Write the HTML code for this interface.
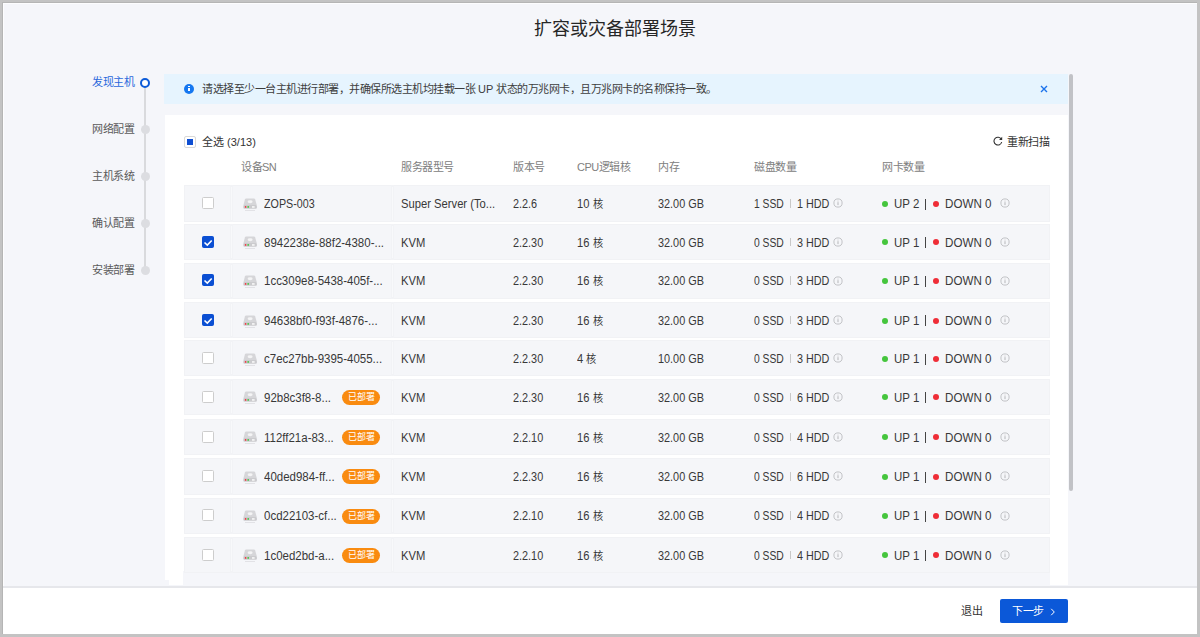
<!DOCTYPE html>
<html lang="zh-CN"><head><meta charset="utf-8">
<style>
*{margin:0;padding:0;box-sizing:border-box}
html,body{width:1200px;height:637px;overflow:hidden;background:#c3c3c3;font-family:"Liberation Sans",sans-serif}
#frame{position:absolute;left:2px;top:2px;width:1195px;height:632px;background:#b5b5b5}
#wl{position:absolute;left:3px;top:3px;width:1194px;height:631px;background:#fdfdfe}
#bg{position:absolute;left:4px;top:4px;width:1193px;height:630px;background:#f5f6fa}
.j{text-align:justify;text-align-last:justify;white-space:nowrap}
.title{position:absolute;left:534px;top:15px;width:162px;font-size:18px;color:#262626;line-height:28px}
.step{position:absolute;left:92.2px;width:42px;font-size:11px;letter-spacing:-0.5px;line-height:16px;color:#5a5a5a}
.step.act{color:#2a68dc}
.sdot{position:absolute;left:140.5px;width:9px;height:9px;border-radius:50%;background:#dcdde1}
.sdot.act{background:#fff;border:2px solid #0d5bd8;width:10px;height:10px;margin-left:-0.2px;margin-top:0px}
.vline{position:absolute;left:144px;top:84px;width:2px;height:186px;background:#d9dadd}
.alert{position:absolute;left:164px;top:74px;width:904px;height:29.5px;background:#e6f4fe}
.alert .ic{position:absolute;left:20px;top:9.5px;width:10px;height:10px;border-radius:50%;background:#1677f0}
.alert .ic:after{content:"";position:absolute;left:4.3px;top:4px;width:1.4px;height:3.6px;background:#fff}
.alert .ic:before{content:"";position:absolute;left:4.3px;top:2.2px;width:1.4px;height:1.2px;background:#fff}
.alert .txt{position:absolute;left:38px;top:7px;font-size:11px;letter-spacing:-0.5px;line-height:16px;color:#3d3d3d;white-space:nowrap}
.alert .x{position:absolute;left:876.3px;top:11px;width:8px;height:8px}
.scroll{position:absolute;left:1068.7px;top:74px;width:4px;height:417px;border-radius:2px;background:#c1c2c6}
.panel{position:absolute;left:165px;top:115px;width:903px;height:456px;background:#fff}
.cball{position:absolute;left:19px;top:21px;width:12px;height:12px;border:1px solid #d9d9d9;border-radius:2px;background:#fff}
.cball:after{content:"";position:absolute;left:2px;top:2px;width:6px;height:6px;background:#0f4fd2}
.selall{position:absolute;left:37px;top:19px;font-size:11px;line-height:16px;color:#333;white-space:nowrap}
.rescan{position:absolute;left:842px;top:19px;font-size:11px;letter-spacing:-0.5px;line-height:16px;color:#333;white-space:nowrap}
.hdr{position:absolute;top:44px;font-size:11px;letter-spacing:-0.5px;line-height:16px;color:#808080;white-space:nowrap}
.row{position:absolute;left:184px;width:866px;height:36.3px;background:#f5f6f9;box-shadow:inset 0 0 0 1px #f1f2f5}
.row .c0{position:absolute;left:46px;top:0;width:3px;height:100%;background:#f2f3f6;border-left:1px solid #f2f3f6;border-right:1px solid #f2f3f6}
.row .c0:after,.row .c1:after{content:"";position:absolute;left:0;top:2px;bottom:2px;width:1px;background:#f8f9fb}
.row .c1{position:absolute;left:206.5px;top:0;width:3px;height:100%;background:#f2f3f6;border-left:1px solid #f2f3f6;border-right:1px solid #f2f3f6}
.cb{position:absolute;left:18px;top:11.8px;width:12px;height:12px;border:1px solid #cdcdcd;border-radius:1.5px;background:#fff}
.cb.chk{background:#0b4fd3;border-color:#0b4fd3}
.cb.chk svg{position:absolute;left:-1px;top:-1px}
.srv{position:absolute;left:57px;top:10.5px}
.t{position:absolute;top:10.8px;font-size:12px;transform-origin:0 50%;line-height:16px;color:#383838;white-space:nowrap}
.sn{left:80px}
.t i{font-style:normal;font-size:11px;letter-spacing:0}
.badge{position:absolute;left:158px;top:11.2px;width:38px;height:15px;border-radius:8px;background:#f98b10;color:#fff;font-size:9px;line-height:15px;text-align:center}
.sep{position:absolute;top:13.9px;width:1px;height:8.5px;background:#c8c8c8}
.bar{position:absolute;left:740.8px;top:13.4px;width:1px;height:11px;background:#444}
.dot{position:absolute;top:15.55px;width:6px;height:6px;border-radius:50%}
.dot.g{left:698.3px;background:#45c53d}
.dot.r{left:749.2px;background:#ef2d37}
.inf1{position:absolute;left:649px;top:13px;line-height:0}
.inf2{position:absolute;left:816px;top:13px;line-height:0}
.footer{position:absolute;left:3px;top:586px;width:1194px;height:48px;background:#fff;border-top:2.5px solid #e6e7eb}
.quit{position:absolute;left:958px;top:15px;font-size:11px;letter-spacing:-0.5px;line-height:16px;color:#333}
.next{position:absolute;left:997px;top:10.5px;width:68px;height:24px;border-radius:2px;background:#0b58d8;color:#fff;font-size:10.5px;line-height:24px;text-align:left;padding-left:12px;white-space:nowrap}
</style></head><body>
<div id="frame"></div>
<div id="wl"></div><div id="bg"></div>
<div class="title j">扩容或灾备部署场景</div>
<div class="vline"></div>
<div class="step act j" style="top:74.3px">发现主机</div><div class="sdot act" style="top:77.8px"></div><div class="step j" style="top:121.3px">网络配置</div><div class="sdot" style="top:124.8px"></div><div class="step j" style="top:168.3px">主机系统</div><div class="sdot" style="top:171.8px"></div><div class="step j" style="top:215.3px">确认配置</div><div class="sdot" style="top:218.8px"></div><div class="step j" style="top:262.3px">安装部署</div><div class="sdot" style="top:265.8px"></div>
<div class="alert"><div class="ic"></div><div class="txt j" style="width:514.7px">请选择至少一台主机进行部署，并确保所选主机均挂载一张<span style="letter-spacing:0"> UP </span>状态的万兆网卡，且万兆网卡的名称保持一致。</div>
<svg class="x" viewBox="0 0 8 8"><path d="M1 1 L7 7 M7 1 L1 7" stroke="#1b72ec" stroke-width="1.4"/></svg></div>
<div class="scroll"></div>
<div style="position:absolute;left:1050px;top:571px;width:17.7px;height:14px;background:#fff"></div><div style="position:absolute;left:165px;top:571px;width:18px;height:9px;background:#fff"></div><div style="position:absolute;left:169px;top:580px;width:13.5px;height:5px;background:#fff"></div>
<div class="panel">
<div class="cball"></div><div class="selall j" style="width:53.8px">全选 (3/13)</div>
<div class="rescan j" style="width:42px"><svg width="10" height="10" viewBox="0 0 10 10" style="position:absolute;left:-14px;top:1.5px"><path d="M8.3 3.2 A3.9 3.9 0 1 0 8.7 6" fill="none" stroke="#333" stroke-width="1.1"/><path d="M9.2 0.8 L9.2 4 L6 4 Z" fill="#333"/></svg>重新扫描</div>
<div class="hdr j" style="left:76px;width:35.3px">设备SN</div>
<div class="hdr j" style="left:236px;width:52.5px">服务器型号</div>
<div class="hdr j" style="left:348px;width:31.5px">版本号</div>
<div class="hdr j" style="left:412px;width:53.3px">CPU逻辑核</div>
<div class="hdr j" style="left:493px;width:21px">内存</div>
<div class="hdr j" style="left:589px;width:42px">磁盘数量</div>
<div class="hdr j" style="left:717px;width:42px">网卡数量</div>
</div>
<div class="rows" style="position:absolute;left:0;top:0">
<div class="row" style="top:185.25px">
<div class="c0"></div><div class="c1"></div>
<div class="cb"></div>
<svg class="srv" width="18" height="16" viewBox="0 0 18 16"><path d="M2.4 9.2 L3.9 3.4 Q4.2 2.4 5.2 2.4 H12.9 Q13.9 2.4 14.2 3.4 L15.8 9.2 Z" fill="#d6d6d9"/><ellipse cx="9.1" cy="5.8" rx="2.5" ry="1.45" fill="#f4f4f5"/><rect x="2.3" y="8.9" width="13.6" height="3.9" rx="1.2" fill="#cbcbce"/><circle cx="4.6" cy="10.9" r="0.85" fill="#f0323a"/><circle cx="7.2" cy="10.9" r="0.85" fill="#3cc43c"/><rect x="11" y="10.2" width="2.6" height="1.5" fill="#fafafa"/><rect x="4" y="14.1" width="10" height="0.8" fill="#dedee1"/></svg>
<span class="t sn" style="transform:scaleX(0.893)">ZOPS-003</span>
<span class="t" style="left:217px;transform:scaleX(0.935)">Super Server (To...</span>
<span class="t" style="left:329px;transform:scaleX(0.905)">2.2.6</span>
<span class="t" style="left:393px;transform:scaleX(0.93)">10 <i>核</i></span>
<span class="t" style="left:474px;transform:scaleX(0.906)">32.00 GB</span>
<span class="t" style="left:570px;transform:scaleX(0.86)">1 SSD</span><span class="sep" style="left:606px"></span><span class="t" style="left:613px;transform:scaleX(0.9)">1 HDD</span><span class="inf1"><svg class="inf" width="10" height="10" viewBox="0 0 10 10"><circle cx="5" cy="5" r="4.1" fill="none" stroke="#bfc0c3" stroke-width="0.95"/><rect x="4.5" y="4.2" width="1" height="2.9" fill="#b5b6b9"/><rect x="4.5" y="2.6" width="1" height="0.95" fill="#c5c6c9"/></svg></span>
<span class="dot g"></span><span class="t" style="left:710px;transform:scaleX(0.956)">UP 2</span><span class="bar"></span><span class="dot r"></span><span class="t" style="left:761px;transform:scaleX(0.968)">DOWN 0</span><span class="inf2"><svg class="inf" width="10" height="10" viewBox="0 0 10 10"><circle cx="5" cy="5" r="4.1" fill="none" stroke="#bfc0c3" stroke-width="0.95"/><rect x="4.5" y="4.2" width="1" height="2.9" fill="#b5b6b9"/><rect x="4.5" y="2.6" width="1" height="0.95" fill="#c5c6c9"/></svg></span>
</div>
<div class="row" style="top:223.85px">
<div class="c0"></div><div class="c1"></div>
<div class="cb chk"><svg width="12" height="12" viewBox="0 0 12 12"><path d="M2.5 6.5 L5.3 9.1 L9.7 4.5" fill="none" stroke="#fff" stroke-width="1.6"/></svg></div>
<svg class="srv" width="18" height="16" viewBox="0 0 18 16"><path d="M2.4 9.2 L3.9 3.4 Q4.2 2.4 5.2 2.4 H12.9 Q13.9 2.4 14.2 3.4 L15.8 9.2 Z" fill="#d6d6d9"/><ellipse cx="9.1" cy="5.8" rx="2.5" ry="1.45" fill="#f4f4f5"/><rect x="2.3" y="8.9" width="13.6" height="3.9" rx="1.2" fill="#cbcbce"/><circle cx="4.6" cy="10.9" r="0.85" fill="#f0323a"/><circle cx="7.2" cy="10.9" r="0.85" fill="#3cc43c"/><rect x="11" y="10.2" width="2.6" height="1.5" fill="#fafafa"/><rect x="4" y="14.1" width="10" height="0.8" fill="#dedee1"/></svg>
<span class="t sn" style="transform:scaleX(0.957)">8942238e-88f2-4380-...</span>
<span class="t" style="left:217px;transform:scaleX(0.935)">KVM</span>
<span class="t" style="left:329px;transform:scaleX(0.905)">2.2.30</span>
<span class="t" style="left:393px;transform:scaleX(0.93)">16 <i>核</i></span>
<span class="t" style="left:474px;transform:scaleX(0.906)">32.00 GB</span>
<span class="t" style="left:570px;transform:scaleX(0.86)">0 SSD</span><span class="sep" style="left:606px"></span><span class="t" style="left:613px;transform:scaleX(0.9)">3 HDD</span><span class="inf1"><svg class="inf" width="10" height="10" viewBox="0 0 10 10"><circle cx="5" cy="5" r="4.1" fill="none" stroke="#bfc0c3" stroke-width="0.95"/><rect x="4.5" y="4.2" width="1" height="2.9" fill="#b5b6b9"/><rect x="4.5" y="2.6" width="1" height="0.95" fill="#c5c6c9"/></svg></span>
<span class="dot g"></span><span class="t" style="left:710px;transform:scaleX(0.956)">UP 1</span><span class="bar"></span><span class="dot r"></span><span class="t" style="left:761px;transform:scaleX(0.968)">DOWN 0</span><span class="inf2"><svg class="inf" width="10" height="10" viewBox="0 0 10 10"><circle cx="5" cy="5" r="4.1" fill="none" stroke="#bfc0c3" stroke-width="0.95"/><rect x="4.5" y="4.2" width="1" height="2.9" fill="#b5b6b9"/><rect x="4.5" y="2.6" width="1" height="0.95" fill="#c5c6c9"/></svg></span>
</div>
<div class="row" style="top:262.55px">
<div class="c0"></div><div class="c1"></div>
<div class="cb chk"><svg width="12" height="12" viewBox="0 0 12 12"><path d="M2.5 6.5 L5.3 9.1 L9.7 4.5" fill="none" stroke="#fff" stroke-width="1.6"/></svg></div>
<svg class="srv" width="18" height="16" viewBox="0 0 18 16"><path d="M2.4 9.2 L3.9 3.4 Q4.2 2.4 5.2 2.4 H12.9 Q13.9 2.4 14.2 3.4 L15.8 9.2 Z" fill="#d6d6d9"/><ellipse cx="9.1" cy="5.8" rx="2.5" ry="1.45" fill="#f4f4f5"/><rect x="2.3" y="8.9" width="13.6" height="3.9" rx="1.2" fill="#cbcbce"/><circle cx="4.6" cy="10.9" r="0.85" fill="#f0323a"/><circle cx="7.2" cy="10.9" r="0.85" fill="#3cc43c"/><rect x="11" y="10.2" width="2.6" height="1.5" fill="#fafafa"/><rect x="4" y="14.1" width="10" height="0.8" fill="#dedee1"/></svg>
<span class="t sn" style="transform:scaleX(0.957)">1cc309e8-5438-405f-...</span>
<span class="t" style="left:217px;transform:scaleX(0.935)">KVM</span>
<span class="t" style="left:329px;transform:scaleX(0.905)">2.2.30</span>
<span class="t" style="left:393px;transform:scaleX(0.93)">16 <i>核</i></span>
<span class="t" style="left:474px;transform:scaleX(0.906)">32.00 GB</span>
<span class="t" style="left:570px;transform:scaleX(0.86)">0 SSD</span><span class="sep" style="left:606px"></span><span class="t" style="left:613px;transform:scaleX(0.9)">3 HDD</span><span class="inf1"><svg class="inf" width="10" height="10" viewBox="0 0 10 10"><circle cx="5" cy="5" r="4.1" fill="none" stroke="#bfc0c3" stroke-width="0.95"/><rect x="4.5" y="4.2" width="1" height="2.9" fill="#b5b6b9"/><rect x="4.5" y="2.6" width="1" height="0.95" fill="#c5c6c9"/></svg></span>
<span class="dot g"></span><span class="t" style="left:710px;transform:scaleX(0.956)">UP 1</span><span class="bar"></span><span class="dot r"></span><span class="t" style="left:761px;transform:scaleX(0.968)">DOWN 0</span><span class="inf2"><svg class="inf" width="10" height="10" viewBox="0 0 10 10"><circle cx="5" cy="5" r="4.1" fill="none" stroke="#bfc0c3" stroke-width="0.95"/><rect x="4.5" y="4.2" width="1" height="2.9" fill="#b5b6b9"/><rect x="4.5" y="2.6" width="1" height="0.95" fill="#c5c6c9"/></svg></span>
</div>
<div class="row" style="top:302.05px">
<div class="c0"></div><div class="c1"></div>
<div class="cb chk"><svg width="12" height="12" viewBox="0 0 12 12"><path d="M2.5 6.5 L5.3 9.1 L9.7 4.5" fill="none" stroke="#fff" stroke-width="1.6"/></svg></div>
<svg class="srv" width="18" height="16" viewBox="0 0 18 16"><path d="M2.4 9.2 L3.9 3.4 Q4.2 2.4 5.2 2.4 H12.9 Q13.9 2.4 14.2 3.4 L15.8 9.2 Z" fill="#d6d6d9"/><ellipse cx="9.1" cy="5.8" rx="2.5" ry="1.45" fill="#f4f4f5"/><rect x="2.3" y="8.9" width="13.6" height="3.9" rx="1.2" fill="#cbcbce"/><circle cx="4.6" cy="10.9" r="0.85" fill="#f0323a"/><circle cx="7.2" cy="10.9" r="0.85" fill="#3cc43c"/><rect x="11" y="10.2" width="2.6" height="1.5" fill="#fafafa"/><rect x="4" y="14.1" width="10" height="0.8" fill="#dedee1"/></svg>
<span class="t sn" style="transform:scaleX(0.957)">94638bf0-f93f-4876-...</span>
<span class="t" style="left:217px;transform:scaleX(0.935)">KVM</span>
<span class="t" style="left:329px;transform:scaleX(0.905)">2.2.30</span>
<span class="t" style="left:393px;transform:scaleX(0.93)">16 <i>核</i></span>
<span class="t" style="left:474px;transform:scaleX(0.906)">32.00 GB</span>
<span class="t" style="left:570px;transform:scaleX(0.86)">0 SSD</span><span class="sep" style="left:606px"></span><span class="t" style="left:613px;transform:scaleX(0.9)">3 HDD</span><span class="inf1"><svg class="inf" width="10" height="10" viewBox="0 0 10 10"><circle cx="5" cy="5" r="4.1" fill="none" stroke="#bfc0c3" stroke-width="0.95"/><rect x="4.5" y="4.2" width="1" height="2.9" fill="#b5b6b9"/><rect x="4.5" y="2.6" width="1" height="0.95" fill="#c5c6c9"/></svg></span>
<span class="dot g"></span><span class="t" style="left:710px;transform:scaleX(0.956)">UP 1</span><span class="bar"></span><span class="dot r"></span><span class="t" style="left:761px;transform:scaleX(0.968)">DOWN 0</span><span class="inf2"><svg class="inf" width="10" height="10" viewBox="0 0 10 10"><circle cx="5" cy="5" r="4.1" fill="none" stroke="#bfc0c3" stroke-width="0.95"/><rect x="4.5" y="4.2" width="1" height="2.9" fill="#b5b6b9"/><rect x="4.5" y="2.6" width="1" height="0.95" fill="#c5c6c9"/></svg></span>
</div>
<div class="row" style="top:340.20px">
<div class="c0"></div><div class="c1"></div>
<div class="cb"></div>
<svg class="srv" width="18" height="16" viewBox="0 0 18 16"><path d="M2.4 9.2 L3.9 3.4 Q4.2 2.4 5.2 2.4 H12.9 Q13.9 2.4 14.2 3.4 L15.8 9.2 Z" fill="#d6d6d9"/><ellipse cx="9.1" cy="5.8" rx="2.5" ry="1.45" fill="#f4f4f5"/><rect x="2.3" y="8.9" width="13.6" height="3.9" rx="1.2" fill="#cbcbce"/><circle cx="4.6" cy="10.9" r="0.85" fill="#f0323a"/><circle cx="7.2" cy="10.9" r="0.85" fill="#3cc43c"/><rect x="11" y="10.2" width="2.6" height="1.5" fill="#fafafa"/><rect x="4" y="14.1" width="10" height="0.8" fill="#dedee1"/></svg>
<span class="t sn" style="transform:scaleX(0.957)">c7ec27bb-9395-4055...</span>
<span class="t" style="left:217px;transform:scaleX(0.935)">KVM</span>
<span class="t" style="left:329px;transform:scaleX(0.905)">2.2.30</span>
<span class="t" style="left:393px;transform:scaleX(0.93)">4 <i>核</i></span>
<span class="t" style="left:474px;transform:scaleX(0.906)">10.00 GB</span>
<span class="t" style="left:570px;transform:scaleX(0.86)">0 SSD</span><span class="sep" style="left:606px"></span><span class="t" style="left:613px;transform:scaleX(0.9)">3 HDD</span><span class="inf1"><svg class="inf" width="10" height="10" viewBox="0 0 10 10"><circle cx="5" cy="5" r="4.1" fill="none" stroke="#bfc0c3" stroke-width="0.95"/><rect x="4.5" y="4.2" width="1" height="2.9" fill="#b5b6b9"/><rect x="4.5" y="2.6" width="1" height="0.95" fill="#c5c6c9"/></svg></span>
<span class="dot g"></span><span class="t" style="left:710px;transform:scaleX(0.956)">UP 1</span><span class="bar"></span><span class="dot r"></span><span class="t" style="left:761px;transform:scaleX(0.968)">DOWN 0</span><span class="inf2"><svg class="inf" width="10" height="10" viewBox="0 0 10 10"><circle cx="5" cy="5" r="4.1" fill="none" stroke="#bfc0c3" stroke-width="0.95"/><rect x="4.5" y="4.2" width="1" height="2.9" fill="#b5b6b9"/><rect x="4.5" y="2.6" width="1" height="0.95" fill="#c5c6c9"/></svg></span>
</div>
<div class="row" style="top:378.80px">
<div class="c0"></div><div class="c1"></div>
<div class="cb"></div>
<svg class="srv" width="18" height="16" viewBox="0 0 18 16"><path d="M2.4 9.2 L3.9 3.4 Q4.2 2.4 5.2 2.4 H12.9 Q13.9 2.4 14.2 3.4 L15.8 9.2 Z" fill="#d6d6d9"/><ellipse cx="9.1" cy="5.8" rx="2.5" ry="1.45" fill="#f4f4f5"/><rect x="2.3" y="8.9" width="13.6" height="3.9" rx="1.2" fill="#cbcbce"/><circle cx="4.6" cy="10.9" r="0.85" fill="#f0323a"/><circle cx="7.2" cy="10.9" r="0.85" fill="#3cc43c"/><rect x="11" y="10.2" width="2.6" height="1.5" fill="#fafafa"/><rect x="4" y="14.1" width="10" height="0.8" fill="#dedee1"/></svg>
<span class="t sn" style="transform:scaleX(0.957)">92b8c3f8-8...</span><span class="badge">已部署</span>
<span class="t" style="left:217px;transform:scaleX(0.935)">KVM</span>
<span class="t" style="left:329px;transform:scaleX(0.905)">2.2.30</span>
<span class="t" style="left:393px;transform:scaleX(0.93)">16 <i>核</i></span>
<span class="t" style="left:474px;transform:scaleX(0.906)">32.00 GB</span>
<span class="t" style="left:570px;transform:scaleX(0.86)">0 SSD</span><span class="sep" style="left:606px"></span><span class="t" style="left:613px;transform:scaleX(0.9)">6 HDD</span><span class="inf1"><svg class="inf" width="10" height="10" viewBox="0 0 10 10"><circle cx="5" cy="5" r="4.1" fill="none" stroke="#bfc0c3" stroke-width="0.95"/><rect x="4.5" y="4.2" width="1" height="2.9" fill="#b5b6b9"/><rect x="4.5" y="2.6" width="1" height="0.95" fill="#c5c6c9"/></svg></span>
<span class="dot g"></span><span class="t" style="left:710px;transform:scaleX(0.956)">UP 1</span><span class="bar"></span><span class="dot r"></span><span class="t" style="left:761px;transform:scaleX(0.968)">DOWN 0</span><span class="inf2"><svg class="inf" width="10" height="10" viewBox="0 0 10 10"><circle cx="5" cy="5" r="4.1" fill="none" stroke="#bfc0c3" stroke-width="0.95"/><rect x="4.5" y="4.2" width="1" height="2.9" fill="#b5b6b9"/><rect x="4.5" y="2.6" width="1" height="0.95" fill="#c5c6c9"/></svg></span>
</div>
<div class="row" style="top:418.80px">
<div class="c0"></div><div class="c1"></div>
<div class="cb"></div>
<svg class="srv" width="18" height="16" viewBox="0 0 18 16"><path d="M2.4 9.2 L3.9 3.4 Q4.2 2.4 5.2 2.4 H12.9 Q13.9 2.4 14.2 3.4 L15.8 9.2 Z" fill="#d6d6d9"/><ellipse cx="9.1" cy="5.8" rx="2.5" ry="1.45" fill="#f4f4f5"/><rect x="2.3" y="8.9" width="13.6" height="3.9" rx="1.2" fill="#cbcbce"/><circle cx="4.6" cy="10.9" r="0.85" fill="#f0323a"/><circle cx="7.2" cy="10.9" r="0.85" fill="#3cc43c"/><rect x="11" y="10.2" width="2.6" height="1.5" fill="#fafafa"/><rect x="4" y="14.1" width="10" height="0.8" fill="#dedee1"/></svg>
<span class="t sn" style="transform:scaleX(0.957)">112ff21a-83...</span><span class="badge">已部署</span>
<span class="t" style="left:217px;transform:scaleX(0.935)">KVM</span>
<span class="t" style="left:329px;transform:scaleX(0.905)">2.2.10</span>
<span class="t" style="left:393px;transform:scaleX(0.93)">16 <i>核</i></span>
<span class="t" style="left:474px;transform:scaleX(0.906)">32.00 GB</span>
<span class="t" style="left:570px;transform:scaleX(0.86)">0 SSD</span><span class="sep" style="left:606px"></span><span class="t" style="left:613px;transform:scaleX(0.9)">4 HDD</span><span class="inf1"><svg class="inf" width="10" height="10" viewBox="0 0 10 10"><circle cx="5" cy="5" r="4.1" fill="none" stroke="#bfc0c3" stroke-width="0.95"/><rect x="4.5" y="4.2" width="1" height="2.9" fill="#b5b6b9"/><rect x="4.5" y="2.6" width="1" height="0.95" fill="#c5c6c9"/></svg></span>
<span class="dot g"></span><span class="t" style="left:710px;transform:scaleX(0.956)">UP 1</span><span class="bar"></span><span class="dot r"></span><span class="t" style="left:761px;transform:scaleX(0.968)">DOWN 0</span><span class="inf2"><svg class="inf" width="10" height="10" viewBox="0 0 10 10"><circle cx="5" cy="5" r="4.1" fill="none" stroke="#bfc0c3" stroke-width="0.95"/><rect x="4.5" y="4.2" width="1" height="2.9" fill="#b5b6b9"/><rect x="4.5" y="2.6" width="1" height="0.95" fill="#c5c6c9"/></svg></span>
</div>
<div class="row" style="top:458.30px">
<div class="c0"></div><div class="c1"></div>
<div class="cb"></div>
<svg class="srv" width="18" height="16" viewBox="0 0 18 16"><path d="M2.4 9.2 L3.9 3.4 Q4.2 2.4 5.2 2.4 H12.9 Q13.9 2.4 14.2 3.4 L15.8 9.2 Z" fill="#d6d6d9"/><ellipse cx="9.1" cy="5.8" rx="2.5" ry="1.45" fill="#f4f4f5"/><rect x="2.3" y="8.9" width="13.6" height="3.9" rx="1.2" fill="#cbcbce"/><circle cx="4.6" cy="10.9" r="0.85" fill="#f0323a"/><circle cx="7.2" cy="10.9" r="0.85" fill="#3cc43c"/><rect x="11" y="10.2" width="2.6" height="1.5" fill="#fafafa"/><rect x="4" y="14.1" width="10" height="0.8" fill="#dedee1"/></svg>
<span class="t sn" style="transform:scaleX(0.957)">40ded984-ff...</span><span class="badge">已部署</span>
<span class="t" style="left:217px;transform:scaleX(0.935)">KVM</span>
<span class="t" style="left:329px;transform:scaleX(0.905)">2.2.30</span>
<span class="t" style="left:393px;transform:scaleX(0.93)">16 <i>核</i></span>
<span class="t" style="left:474px;transform:scaleX(0.906)">32.00 GB</span>
<span class="t" style="left:570px;transform:scaleX(0.86)">0 SSD</span><span class="sep" style="left:606px"></span><span class="t" style="left:613px;transform:scaleX(0.9)">6 HDD</span><span class="inf1"><svg class="inf" width="10" height="10" viewBox="0 0 10 10"><circle cx="5" cy="5" r="4.1" fill="none" stroke="#bfc0c3" stroke-width="0.95"/><rect x="4.5" y="4.2" width="1" height="2.9" fill="#b5b6b9"/><rect x="4.5" y="2.6" width="1" height="0.95" fill="#c5c6c9"/></svg></span>
<span class="dot g"></span><span class="t" style="left:710px;transform:scaleX(0.956)">UP 1</span><span class="bar"></span><span class="dot r"></span><span class="t" style="left:761px;transform:scaleX(0.968)">DOWN 0</span><span class="inf2"><svg class="inf" width="10" height="10" viewBox="0 0 10 10"><circle cx="5" cy="5" r="4.1" fill="none" stroke="#bfc0c3" stroke-width="0.95"/><rect x="4.5" y="4.2" width="1" height="2.9" fill="#b5b6b9"/><rect x="4.5" y="2.6" width="1" height="0.95" fill="#c5c6c9"/></svg></span>
</div>
<div class="row" style="top:497.55px">
<div class="c0"></div><div class="c1"></div>
<div class="cb"></div>
<svg class="srv" width="18" height="16" viewBox="0 0 18 16"><path d="M2.4 9.2 L3.9 3.4 Q4.2 2.4 5.2 2.4 H12.9 Q13.9 2.4 14.2 3.4 L15.8 9.2 Z" fill="#d6d6d9"/><ellipse cx="9.1" cy="5.8" rx="2.5" ry="1.45" fill="#f4f4f5"/><rect x="2.3" y="8.9" width="13.6" height="3.9" rx="1.2" fill="#cbcbce"/><circle cx="4.6" cy="10.9" r="0.85" fill="#f0323a"/><circle cx="7.2" cy="10.9" r="0.85" fill="#3cc43c"/><rect x="11" y="10.2" width="2.6" height="1.5" fill="#fafafa"/><rect x="4" y="14.1" width="10" height="0.8" fill="#dedee1"/></svg>
<span class="t sn" style="transform:scaleX(0.957)">0cd22103-cf...</span><span class="badge">已部署</span>
<span class="t" style="left:217px;transform:scaleX(0.935)">KVM</span>
<span class="t" style="left:329px;transform:scaleX(0.905)">2.2.10</span>
<span class="t" style="left:393px;transform:scaleX(0.93)">16 <i>核</i></span>
<span class="t" style="left:474px;transform:scaleX(0.906)">32.00 GB</span>
<span class="t" style="left:570px;transform:scaleX(0.86)">0 SSD</span><span class="sep" style="left:606px"></span><span class="t" style="left:613px;transform:scaleX(0.9)">4 HDD</span><span class="inf1"><svg class="inf" width="10" height="10" viewBox="0 0 10 10"><circle cx="5" cy="5" r="4.1" fill="none" stroke="#bfc0c3" stroke-width="0.95"/><rect x="4.5" y="4.2" width="1" height="2.9" fill="#b5b6b9"/><rect x="4.5" y="2.6" width="1" height="0.95" fill="#c5c6c9"/></svg></span>
<span class="dot g"></span><span class="t" style="left:710px;transform:scaleX(0.956)">UP 1</span><span class="bar"></span><span class="dot r"></span><span class="t" style="left:761px;transform:scaleX(0.968)">DOWN 0</span><span class="inf2"><svg class="inf" width="10" height="10" viewBox="0 0 10 10"><circle cx="5" cy="5" r="4.1" fill="none" stroke="#bfc0c3" stroke-width="0.95"/><rect x="4.5" y="4.2" width="1" height="2.9" fill="#b5b6b9"/><rect x="4.5" y="2.6" width="1" height="0.95" fill="#c5c6c9"/></svg></span>
</div>
<div class="row" style="top:536.80px">
<div class="c0"></div><div class="c1"></div>
<div class="cb"></div>
<svg class="srv" width="18" height="16" viewBox="0 0 18 16"><path d="M2.4 9.2 L3.9 3.4 Q4.2 2.4 5.2 2.4 H12.9 Q13.9 2.4 14.2 3.4 L15.8 9.2 Z" fill="#d6d6d9"/><ellipse cx="9.1" cy="5.8" rx="2.5" ry="1.45" fill="#f4f4f5"/><rect x="2.3" y="8.9" width="13.6" height="3.9" rx="1.2" fill="#cbcbce"/><circle cx="4.6" cy="10.9" r="0.85" fill="#f0323a"/><circle cx="7.2" cy="10.9" r="0.85" fill="#3cc43c"/><rect x="11" y="10.2" width="2.6" height="1.5" fill="#fafafa"/><rect x="4" y="14.1" width="10" height="0.8" fill="#dedee1"/></svg>
<span class="t sn" style="transform:scaleX(0.957)">1c0ed2bd-a...</span><span class="badge">已部署</span>
<span class="t" style="left:217px;transform:scaleX(0.935)">KVM</span>
<span class="t" style="left:329px;transform:scaleX(0.905)">2.2.10</span>
<span class="t" style="left:393px;transform:scaleX(0.93)">16 <i>核</i></span>
<span class="t" style="left:474px;transform:scaleX(0.906)">32.00 GB</span>
<span class="t" style="left:570px;transform:scaleX(0.86)">0 SSD</span><span class="sep" style="left:606px"></span><span class="t" style="left:613px;transform:scaleX(0.9)">4 HDD</span><span class="inf1"><svg class="inf" width="10" height="10" viewBox="0 0 10 10"><circle cx="5" cy="5" r="4.1" fill="none" stroke="#bfc0c3" stroke-width="0.95"/><rect x="4.5" y="4.2" width="1" height="2.9" fill="#b5b6b9"/><rect x="4.5" y="2.6" width="1" height="0.95" fill="#c5c6c9"/></svg></span>
<span class="dot g"></span><span class="t" style="left:710px;transform:scaleX(0.956)">UP 1</span><span class="bar"></span><span class="dot r"></span><span class="t" style="left:761px;transform:scaleX(0.968)">DOWN 0</span><span class="inf2"><svg class="inf" width="10" height="10" viewBox="0 0 10 10"><circle cx="5" cy="5" r="4.1" fill="none" stroke="#bfc0c3" stroke-width="0.95"/><rect x="4.5" y="4.2" width="1" height="2.9" fill="#b5b6b9"/><rect x="4.5" y="2.6" width="1" height="0.95" fill="#c5c6c9"/></svg></span>
</div>
</div>
<div class="footer"><div class="quit j" style="width:21px">退出</div><div class="next"><span class="j" style="letter-spacing:-0.5px;font-size:11px;display:inline-block;width:31.5px">下一步</span><svg width="6" height="8" viewBox="0 0 6 8" style="position:absolute;left:49.5px;top:9px"><path d="M1.2 0.8 L4.3 4 L1.2 7.2" fill="none" stroke="#fff" stroke-width="1"/></svg></div></div>

</body></html>
